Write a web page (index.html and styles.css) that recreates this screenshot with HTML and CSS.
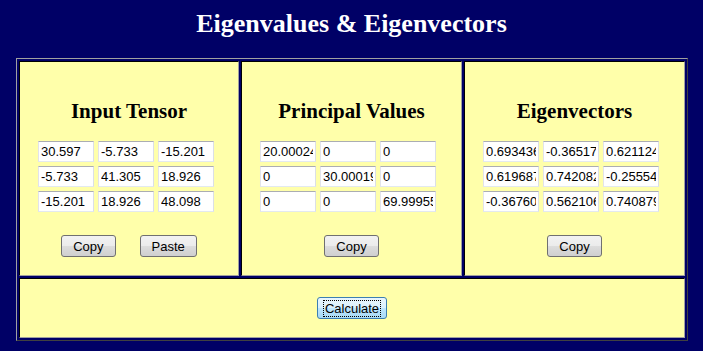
FILE: index.html
```html
<!DOCTYPE html>
<html lang="en">
<head>
    <meta charset="UTF-8">
    <title>Eigenvalues &amp; Eigenvectors</title>
    <link rel="stylesheet" href="styles.css">
</head>
<body>
    <h1 class="title">Eigenvalues &amp; Eigenvectors</h1>

    <div class="frame">
        <div class="panel">
            <h2>Input Tensor</h2>
            <div class="matrix">
                <input type="text" value="30.597">
                <input type="text" value="-5.733">
                <input type="text" value="-15.201">
                <input type="text" value="-5.733">
                <input type="text" value="41.305">
                <input type="text" value="18.926">
                <input type="text" value="-15.201">
                <input type="text" value="18.926">
                <input type="text" value="48.098">
            </div>
            <div class="actions">
                <button>Copy</button>
                <button>Paste</button>
            </div>
        </div>

        <div class="panel">
            <h2>Principal Values</h2>
            <div class="matrix">
                <input type="text" value="20.000249">
                <input type="text" value="0">
                <input type="text" value="0">
                <input type="text" value="0">
                <input type="text" value="30.000195">
                <input type="text" value="0">
                <input type="text" value="0">
                <input type="text" value="0">
                <input type="text" value="69.999555">
            </div>
            <div class="actions">
                <button>Copy</button>
            </div>
        </div>

        <div class="panel">
            <h2>Eigenvectors</h2>
            <div class="matrix">
                <input type="text" value="0.6934368">
                <input type="text" value="-0.365174">
                <input type="text" value="0.6211245">
                <input type="text" value="0.6196874">
                <input type="text" value="0.7420826">
                <input type="text" value="-0.255544">
                <input type="text" value="-0.367607">
                <input type="text" value="0.5621066">
                <input type="text" value="0.7408793">
            </div>
            <div class="actions">
                <button>Copy</button>
            </div>
        </div>

        <div class="panel footer">
            <button class="calc"><span>Calculate</span></button>
        </div>
    </div>
</body>
</html>
```

FILE: styles.css
```css
body {
    margin: 0;
    background-color: #000066;
    font-family: "Liberation Sans", Arial, sans-serif;
}

.title {
    margin: 0 0 19px 0;
    padding-top: 9px;
    font-family: "Liberation Serif", "Times New Roman", serif;
    font-size: 26px;
    line-height: 30px;
    font-weight: bold;
    color: #ffffff;
    text-align: center;
}

.frame {
    box-sizing: border-box;
    width: 672px;
    margin-left: 16px;
    display: grid;
    grid-template-columns: 220px 221px 221px;
    grid-template-rows: 215px 60px;
    gap: 2px;
    padding: 2px;
    border: 1px solid;
    border-color: #a0a0a0 #404040 #404040 #a0a0a0;
}

.panel {
    box-sizing: border-box;
    background-color: #ffffaa;
    border: 1px solid;
    border-color: #000000 #a0a0a0 #a0a0a0 #000000;
    padding-top: 37px;
    display: flex;
    flex-direction: column;
    align-items: center;
}

.panel h2 {
    margin: 0;
    font-family: "Liberation Serif", "Times New Roman", serif;
    font-size: 21px;
    line-height: 24px;
    font-weight: bold;
    color: #000000;
}

.matrix {
    align-self: flex-start;
    margin: 18px 0 0 18px;
    display: grid;
    grid-template-columns: 56px 56px 56px;
    gap: 4px;
}

.matrix input {
    box-sizing: border-box;
    width: 56px;
    height: 21px;
    margin: 0;
    padding: 1px 2px;
    border: 1px solid;
    border-color: #abadb3 #dbdfe6 #e3e9ef #e2e3ea;
    background: #ffffff;
    font-family: "Liberation Sans", Arial, sans-serif;
    font-size: 13px;
    color: #000000;
    outline: none;
}

.actions {
    margin-top: 23px;
    display: flex;
    gap: 24px;
}

button {
    box-sizing: border-box;
    height: 22px;
    margin: 0;
    padding: 0 11px;
    border: 1px solid #707070;
    border-radius: 3px;
    background: linear-gradient(#f2f2f2 0%, #ebebeb 50%, #dddddd 51%, #cfcfcf 100%);
    font-family: "Liberation Sans", Arial, sans-serif;
    font-size: 13px;
    color: #000000;
    cursor: pointer;
}

.footer {
    grid-column: 1 / 4;
    padding-top: 0;
    justify-content: center;
}

.calc {
    padding: 0 5px;
    border-color: #3c7fb1;
    background: linear-gradient(#eaf6fd 0%, #d9f0fc 50%, #bee6fd 51%, #a7d9f5 100%);
}

.calc span {
    display: inline-block;
    padding: 0 1px;
    border: 1px dotted #000000;
    line-height: 15px;
}
```
